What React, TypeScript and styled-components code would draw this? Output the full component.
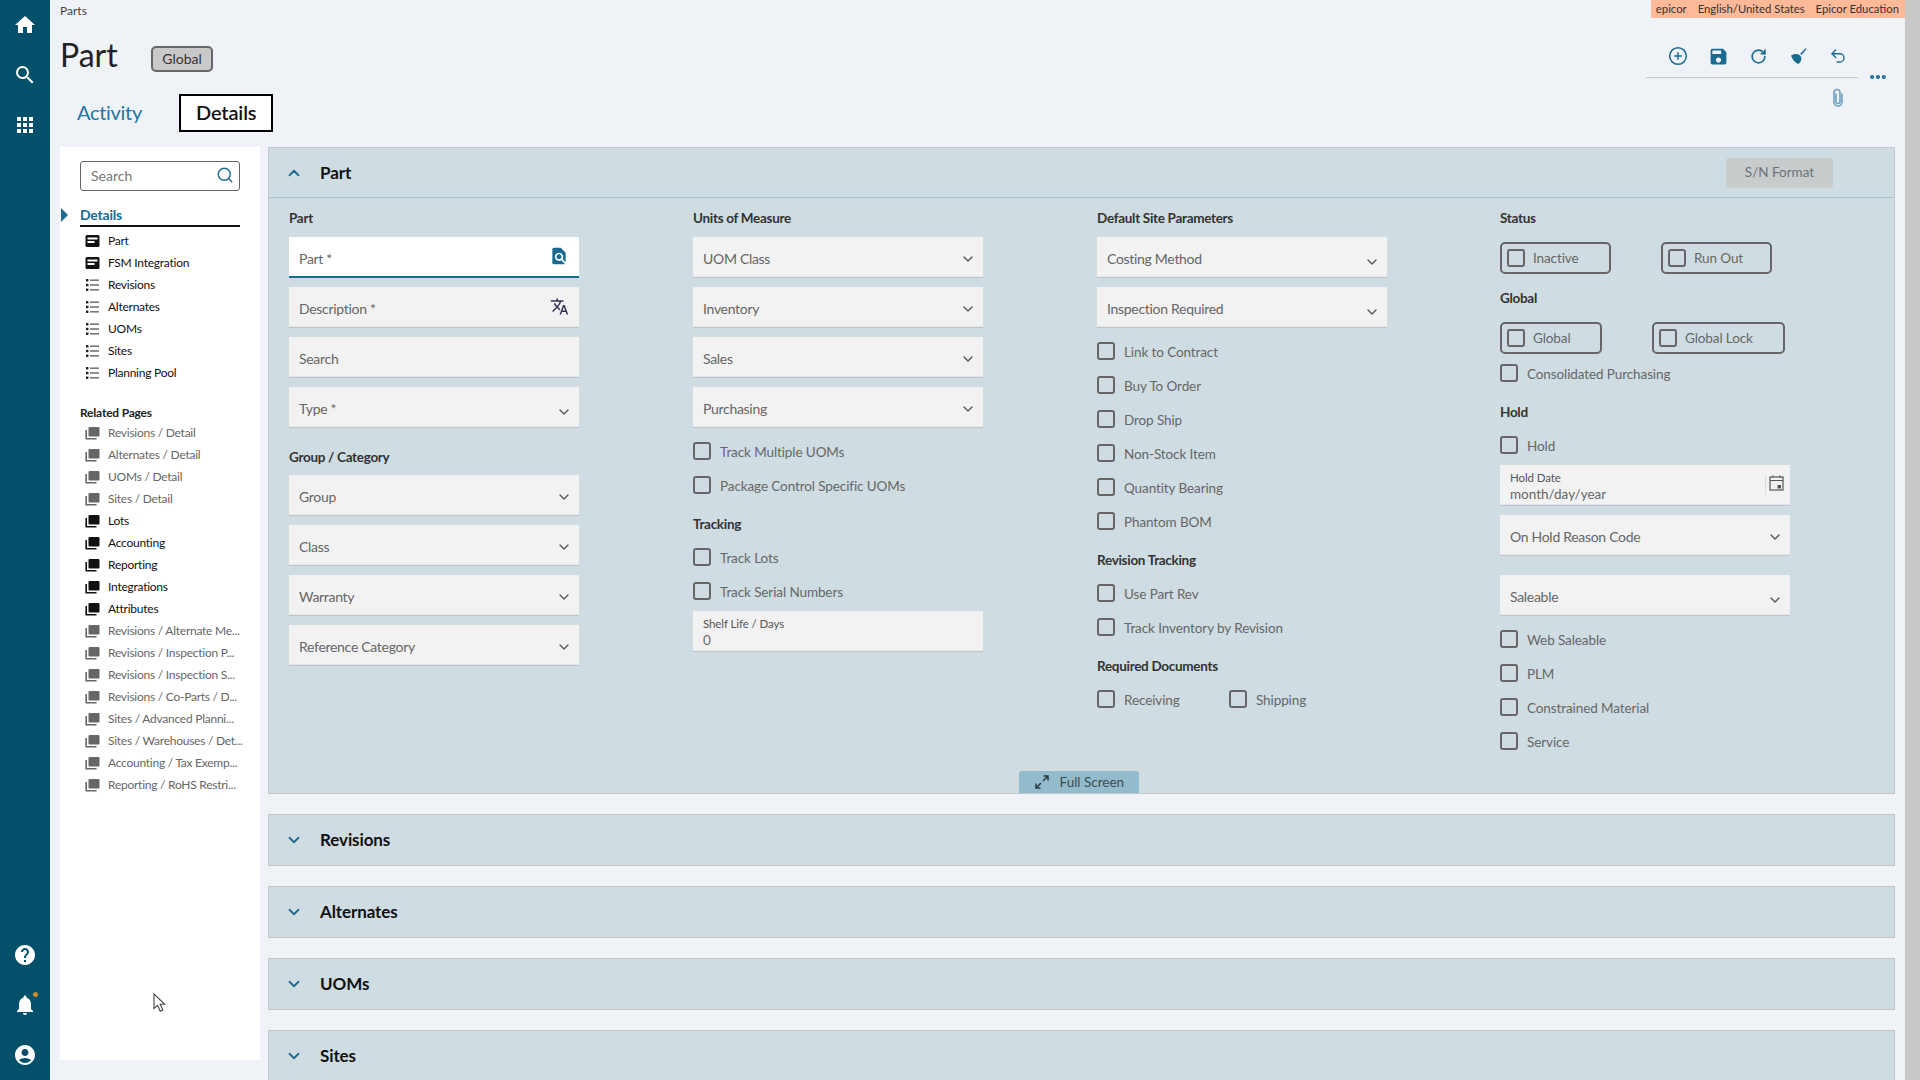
import React from "react";
import styled, { createGlobalStyle } from "styled-components";
import { ChevronDown, ChevronUp, CirclePlus, MoreHorizontal, RotateCw, Search, Undo2 } from "lucide-react";
import {
    MdAccountCircle,
    MdApps,
    MdFindInPage,
    MdHelp,
    MdHome,
    MdNotifications,
    MdSave,
    MdSearch,
    MdTranslate,
} from "react-icons/md";

const BLUE = "#1b6a92";
const FONT = `"Lato", "Open Sans", sans-serif`;

const GlobalStyle = createGlobalStyle`
    html, body {
        margin: 0;
        height: 100%;
        overflow: hidden;
        background: #eff3f8;
        font-family: ${FONT};
    }
    * { box-sizing: border-box; }
`;

const Page = styled.div`
    display: flex;
    width: 1920px;
    height: 1080px;
    overflow: hidden;
`;

const Rail = styled.nav`
    width: 50px;
    flex: none;
    background: #02506a;
    display: flex;
    flex-direction: column;
    justify-content: space-between;
    align-items: center;
    color: #fff;
`;

const RailGroup = styled.div`
    display: flex;
    flex-direction: column;
`;

const RailButton = styled.div`
    position: relative;
    width: 50px;
    height: 50px;
    display: flex;
    align-items: center;
    justify-content: center;
`;

const RailBadge = styled.span`
    position: absolute;
    left: 33px;
    top: 12px;
    width: 5px;
    height: 5px;
    border-radius: 50%;
    background: #d18a2a;
`;

const Main = styled.div`
    flex: 1;
    min-width: 0;
    display: flex;
    flex-direction: column;
`;

const Scrollbar = styled.div`
    width: 15px;
    flex: none;
    background: #c8c8c8;
`;

const TopRow = styled.div`
    height: 18px;
    display: flex;
    justify-content: space-between;
`;

const Crumb = styled.div`
    padding: 3px 0 0 10px;
    font-size: 12px;
    line-height: 16px;
    color: #444;
`;

const UserBar = styled.div`
    display: flex;
    gap: 11px;
    height: 18px;
    padding: 0 6px 0 5px;
    background: #fdb998;
    font-size: 11.3px;
    line-height: 18px;
    color: #333;
`;

const Header = styled.header`
    height: 129px;
    display: flex;
    justify-content: space-between;
`;

const HeaderLeft = styled.div`
    padding-left: 10px;
`;

const TitleRow = styled.div`
    display: flex;
    align-items: flex-start;
    padding-top: 17px;
`;

const Title = styled.h1`
    margin: 0;
    width: 91px;
    font-size: 32px;
    line-height: 40px;
    font-weight: 400;
    color: #222;
`;

const Badge = styled.span`
    margin-top: 11px;
    width: 62px;
    height: 26px;
    border: 2px solid #666;
    border-radius: 5px;
    background: #c9c9c9;
    font-size: 14px;
    line-height: 22px;
    text-align: center;
    color: #333;
`;

const Tabs = styled.div`
    display: flex;
    gap: 20px;
    margin-top: 19px;
`;

const Tab = styled.div<{ $active?: boolean }>`
    height: 38px;
    padding: 0 15px;
    font-size: 20px;
    line-height: 32px;
    letter-spacing: ${(p) => (p.$active ? "-0.15px" : "-0.3px")};
    border: 2px solid ${(p) => (p.$active ? "#000" : "transparent")};
    background: ${(p) => (p.$active ? "#fff" : "transparent")};
    color: ${(p) => (p.$active ? "#111" : "#24769f")};
    font-weight: ${(p) => (p.$active ? 600 : 400)};
`;

const HeaderRight = styled.div`
    width: 242px;
    margin-right: 17px;
`;

const ToolRow = styled.div`
    display: flex;
    align-items: flex-end;
`;

const ToolGroup = styled.div`
    width: 212px;
    height: 60px;
    display: flex;
    padding: 26px 0 0 12px;
    border-bottom: 1px solid #c6cbcf;
`;

const ToolIcon = styled.div`
    width: 40px;
    height: 24px;
    display: flex;
    align-items: center;
    justify-content: center;
    color: ${BLUE};
`;

const MoreButton = styled.div`
    width: 20px;
    height: 20px;
    margin: 0 0 -9px 10px;
    color: ${BLUE};
`;

const ClipRow = styled.div`
    width: 212px;
    margin-top: 10px;
    padding-left: 185px;
    height: 20px;
`;

const Body = styled.div`
    flex: 1;
    min-height: 0;
    display: flex;
    gap: 8px;
    padding-left: 10px;
    overflow: hidden;
`;

const TreePanel = styled.aside`
    position: relative;
    width: 200px;
    height: 913px;
    flex: none;
    background: #fff;
    padding: 14px 20px 0;
`;

const TreeSearch = styled.div`
    height: 30px;
    display: flex;
    align-items: center;
    justify-content: space-between;
    border: 1px solid #666;
    border-radius: 3px;
    padding: 0 5px 2px 10px;
    font-size: 14px;
    color: #777;
`;

const TreeHead = styled.div`
    position: relative;
    margin-top: 14px;
    height: 22px;
    border-bottom: 2px solid #111;
    font-size: 14px;
    line-height: 20px;
    font-weight: 700;
    letter-spacing: -0.2px;
    color: ${BLUE};

    &::before {
        content: "";
        position: absolute;
        left: -19px;
        top: 3px;
        border-left: 7px solid ${BLUE};
        border-top: 7px solid transparent;
        border-bottom: 7px solid transparent;
    }
`;

const TreeList = styled.div`
    margin-top: 3px;
`;

const TreeItem = styled.div<{ $muted?: boolean }>`
    height: 22px;
    display: flex;
    align-items: center;
    gap: 8px;
    padding-left: 5px;
    font-size: 12px;
    letter-spacing: -0.25px;
    white-space: nowrap;
    color: ${(p) => (p.$muted ? "#666" : "#111")};

    svg {
        flex: none;
    }
`;

const TreeText = styled.span`
    margin-top: -1px;
`;

const RelatedTitle = styled.div`
    margin-top: 20px;
    height: 18px;
    font-size: 12px;
    line-height: 18px;
    font-weight: 700;
    letter-spacing: -0.2px;
    color: #222;
`;

const Cursor = styled.div`
    position: absolute;
    left: 93px;
    top: 846px;
`;

const Panels = styled.div`
    width: 1627px;
    flex: none;
    display: flex;
    flex-direction: column;
    gap: 20px;
`;

const Panel = styled.section`
    flex: none;
    background: #cfdce1;
    border: 1px solid #c0c8cc;
`;

const PanelHead = styled.div<{ $open?: boolean }>`
    height: 50px;
    display: flex;
    align-items: center;
    padding: 0 61px ${(p) => (p.$open ? "0" : "1px")} 16px;
    border-bottom: ${(p) => (p.$open ? "1px solid #a3c4cd" : "none")};
    color: ${BLUE};
`;

const PanelTitle = styled.h2`
    flex: 1;
    margin: 0 0 0 17px;
    font-size: 17px;
    font-weight: 700;
    letter-spacing: -0.1px;
    color: #111;
`;

const FormatButton = styled.div`
    width: 107px;
    height: 30px;
    border-radius: 3px;
    background: #c8cccd;
    font-size: 13.5px;
    line-height: 29px;
    text-align: center;
    color: #6b7276;
`;

const FormGrid = styled.div`
    display: grid;
    grid-template-columns: 404px 404px 403px 290px;
    padding: 12px 0 0 20px;
`;

const Column = styled.div`
    display: flex;
    flex-direction: column;
`;

const SectionTitle = styled.div<{ $top?: number }>`
    height: 18px;
    margin-top: ${(p) => p.$top ?? 21}px;
    margin-bottom: 9px;
    font-size: 13.5px;
    line-height: 18px;
    font-weight: 700;
    letter-spacing: -0.3px;
    color: #333;

    &:first-child {
        margin-top: 0;
        line-height: 16px;
    }
`;

const Fields = styled.div<{ $after?: number }>`
    display: flex;
    flex-direction: column;
    gap: 10px;
    margin-bottom: ${(p) => p.$after ?? 9}px;
    width: 290px;
`;

const FieldBox = styled.div<{ $focus?: boolean }>`
    position: relative;
    height: 40px;
    display: flex;
    align-items: center;
    justify-content: space-between;
    padding: 4px 10px 0;
    background: ${(p) => (p.$focus ? "#fff" : "#f2f2f2")};
    box-shadow: 0 1px 0 ${(p) => (p.$focus ? "#1b6a92" : "#bfc5c8")};
    border-bottom: 1px solid ${(p) => (p.$focus ? "#1b6a92" : "#e4e6e7")};
    font-size: 14px;
    letter-spacing: -0.3px;
    color: #666;
`;

const FieldIcon = styled.span<{ $color?: string; $low?: boolean; $inset?: boolean }>`
    display: flex;
    margin: ${(p) => (p.$low ? "6px" : p.$inset ? "-5px" : "0")} ${(p) => (p.$inset ? "0" : "-3px")} 0 0;
    color: ${(p) => p.$color ?? "#555"};
`;

const StackedField = styled(FieldBox)`
    display: block;
    width: 290px;
    padding: 6px 10px 0;
`;

const SmallLabel = styled.div`
    font-size: 11.5px;
    line-height: 14px;
    letter-spacing: -0.1px;
    color: #555;
`;

const StackedValue = styled.div`
    margin-top: 1px;
    font-size: 13.5px;
    line-height: 17px;
    letter-spacing: 0;
    color: #666;
`;

const DateIcon = styled.div`
    position: absolute;
    right: 0;
    top: 10px;
    width: 25px;
    height: 20px;
    padding-left: 3px;
    border-left: 1px solid #dcdcdc;
`;

const Checks = styled.div<{ $after?: number }>`
    display: flex;
    flex-direction: column;
    gap: 16px;
    padding-top: 6px;
    margin-bottom: ${(p) => p.$after ?? 0}px;
`;

const CheckRow = styled.div<{ $width?: number }>`
    display: flex;
    align-items: center;
    gap: 9px;
    height: 18px;
    width: ${(p) => (p.$width ? `${p.$width}px` : "auto")};
    font-size: 13.5px;
    letter-spacing: -0.1px;
    white-space: nowrap;
    color: #666;
`;

const CheckText = styled.span`
    margin-top: 2px;
`;

const CheckBox = styled.span`
    width: 18px;
    height: 18px;
    flex: none;
    border: 2px solid #666;
    border-radius: 3px;
`;

const InlineChecks = styled.div`
    display: flex;
    padding-top: 6px;
`;

const WrapRow = styled.div<{ $top: number }>`
    display: flex;
    gap: 50px;
    margin-top: ${(p) => p.$top}px;
    margin-bottom: 10px;
`;

const WrapCheck = styled.div<{ $width: number }>`
    width: ${(p) => p.$width}px;
    height: 32px;
    display: flex;
    align-items: center;
    gap: 8px;
    padding-left: 5px;
    border: 2px solid #666;
    border-radius: 5px;
    font-size: 13.5px;
    letter-spacing: -0.1px;
    color: #666;
`;

const PanelFoot = styled.div`
    display: flex;
    justify-content: center;
    margin-top: 21px;
    padding-right: 6px;
`;

const FullScreen = styled.div`
    width: 120px;
    height: 22px;
    display: flex;
    align-items: center;
    gap: 11px;
    padding: 0 0 1px 16px;
    border-radius: 3px 3px 0 0;
    background: #92bccb;
    font-size: 13.5px;
    color: #3a4a50;
`;

const CardIcon = () => (
    <svg width="15" height="14" viewBox="0 0 15 14">
        <rect x="0.5" y="1" width="14" height="12" rx="1.5" fill="#111" />
        <rect x="2.5" y="3.5" width="10" height="2" fill="#fff" />
        <rect x="2.5" y="7" width="7" height="2" fill="#fff" />
    </svg>
);

const ListIcon = () => (
    <svg width="15" height="14" viewBox="0 0 15 14">
        <g fill="#222">
            <rect x="1" y="1" width="2.4" height="2.4" />
            <rect x="1" y="5.8" width="2.4" height="2.4" />
            <rect x="1" y="10.6" width="2.4" height="2.4" />
        </g>
        <g fill="#777">
            <rect x="5" y="1.4" width="9" height="1.6" />
            <rect x="5" y="6.2" width="9" height="1.6" />
            <rect x="5" y="11" width="9" height="1.6" />
        </g>
    </svg>
);

const PagesIcon = ({ color }: { color: string }) => (
    <svg width="15" height="14" viewBox="0 0 15 14">
        <rect x="3.5" y="1" width="11" height="9.5" rx="1.2" fill={color} />
        <path d="M1.2 4v8.8h10.3" fill="none" stroke={color} strokeWidth="1.6" />
    </svg>
);

const BroomIcon = () => (
    <svg width="18" height="18" viewBox="0 0 18 18" fill={BLUE}>
        <path d="M16.6 1.2l-5.400 5.600 1.300 1.300 5-6z" />
        <path d="M2 8.600c2.600-1.800 6-2.100 8.200-.8l1.900 1.900c.9 2.600-.4 5.400-2.600 7.200-1.400-.5-2.700-1.400-3.900-2.500C3.900 13 2.800 10.900 2 8.600z" />
    </svg>
);

const ClipIcon = () => (
    <svg width="14" height="20" viewBox="0 0 14 20" fill="none" stroke="#6f9fbb" strokeWidth="1.6">
        <path d="M5 5.500v8a2 2 0 0 0 4 0V4.500a3 3 0 0 0-6 0v9.500a4 4 0 0 0 8 0V5.500" />
    </svg>
);

const CalendarIcon = () => (
    <svg width="15" height="16" viewBox="0 0 15 16" fill="none" stroke="#555" strokeWidth="1.2">
        <rect x="1" y="2" width="13" height="13" />
        <path d="M1 5.500h13M4 .5v2M11 .5v2" />
        <rect x="8.500" y="10" width="3.500" height="3.500" fill="#555" stroke="none" />
    </svg>
);

const ExpandIcon = () => (
    <svg width="14" height="14" viewBox="0 0 14 14" fill="none" stroke="#2c3a40" strokeWidth="1.5">
        <path d="M8 6l5-5M8.500 1H13v4.500M6 8l-5 5M1 8.500V13h4.500" />
    </svg>
);

const PointerIcon = () => (
    <svg width="13" height="20" viewBox="0 0 13 20">
        <path d="M1 1v14.500l3.600-3.200 2.600 6 2.600-1.200-2.600-5.800h4.600z" fill="#fff" stroke="#444" strokeWidth="1.1" />
    </svg>
);

const Select = ({ label, low }: { label: string; low?: boolean }) => (
    <FieldBox>
        {label}
        <FieldIcon $low={low}>
            <ChevronDown size={16} strokeWidth={2} />
        </FieldIcon>
    </FieldBox>
);

const Check = ({ label, width }: { label: string; width?: number }) => (
    <CheckRow $width={width}>
        <CheckBox />
        <CheckText>{label}</CheckText>
    </CheckRow>
);

const CheckList = ({ items, after }: { items: string[]; after?: number }) => (
    <Checks $after={after}>
        {items.map((item) => (
            <Check key={item} label={item} />
        ))}
    </Checks>
);

const Boxed = ({ label, width }: { label: string; width: number }) => (
    <WrapCheck $width={width}>
        <CheckBox />
        {label}
    </WrapCheck>
);

const detailItems = [
    { label: "Part", card: true },
    { label: "FSM Integration", card: true },
    { label: "Revisions" },
    { label: "Alternates" },
    { label: "UOMs" },
    { label: "Sites" },
    { label: "Planning Pool" },
];

const relatedPages = [
    { label: "Revisions / Detail", muted: true },
    { label: "Alternates / Detail", muted: true },
    { label: "UOMs / Detail", muted: true },
    { label: "Sites / Detail", muted: true },
    { label: "Lots" },
    { label: "Accounting" },
    { label: "Reporting" },
    { label: "Integrations" },
    { label: "Attributes" },
    { label: "Revisions / Alternate Me...", muted: true },
    { label: "Revisions / Inspection P...", muted: true },
    { label: "Revisions / Inspection S...", muted: true },
    { label: "Revisions / Co-Parts / D...", muted: true },
    { label: "Sites / Advanced Planni...", muted: true },
    { label: "Sites / Warehouses / Det...", muted: true },
    { label: "Accounting / Tax Exemp...", muted: true },
    { label: "Reporting / RoHS Restri...", muted: true },
];

const closedPanels = ["Revisions", "Alternates", "UOMs", "Sites"];

export default function App() {
    return (
        <Page>
            <GlobalStyle />
            <Rail>
                <RailGroup>
                    <RailButton><MdHome size={24} /></RailButton>
                    <RailButton><MdSearch size={24} /></RailButton>
                    <RailButton><MdApps size={24} /></RailButton>
                </RailGroup>
                <RailGroup>
                    <RailButton><MdHelp size={24} /></RailButton>
                    <RailButton>
                        <MdNotifications size={24} />
                        <RailBadge />
                    </RailButton>
                    <RailButton><MdAccountCircle size={24} /></RailButton>
                </RailGroup>
            </Rail>

            <Main>
                <TopRow>
                    <Crumb>Parts</Crumb>
                    <UserBar>
                        <span>epicor</span>
                        <span>English/United States</span>
                        <span>Epicor Education</span>
                    </UserBar>
                </TopRow>

                <Header>
                    <HeaderLeft>
                        <TitleRow>
                            <Title>Part</Title>
                            <Badge>Global</Badge>
                        </TitleRow>
                        <Tabs>
                            <Tab>Activity</Tab>
                            <Tab $active>Details</Tab>
                        </Tabs>
                    </HeaderLeft>
                    <HeaderRight>
                        <ToolRow>
                            <ToolGroup>
                                <ToolIcon><CirclePlus size={20} strokeWidth={1.8} /></ToolIcon>
                                <ToolIcon><MdSave size={21} /></ToolIcon>
                                <ToolIcon><RotateCw size={17} strokeWidth={2.4} /></ToolIcon>
                                <ToolIcon><BroomIcon /></ToolIcon>
                                <ToolIcon><Undo2 size={18} strokeWidth={1.8} /></ToolIcon>
                            </ToolGroup>
                            <MoreButton><MoreHorizontal size={20} strokeWidth={3} /></MoreButton>
                        </ToolRow>
                        <ClipRow><ClipIcon /></ClipRow>
                    </HeaderRight>
                </Header>

                <Body>
                    <TreePanel>
                        <TreeSearch>
                            Search
                            <Search size={18} color={BLUE} strokeWidth={1.9} />
                        </TreeSearch>
                        <TreeHead>Details</TreeHead>
                        <TreeList>
                            {detailItems.map((item) => (
                                <TreeItem key={item.label}>
                                    {item.card ? <CardIcon /> : <ListIcon />}
                                    <TreeText>{item.label}</TreeText>
                                </TreeItem>
                            ))}
                        </TreeList>
                        <RelatedTitle>Related Pages</RelatedTitle>
                        {relatedPages.map((page) => (
                            <TreeItem key={page.label} $muted={page.muted}>
                                <PagesIcon color={page.muted ? "#666" : "#111"} />
                                <TreeText>{page.label}</TreeText>
                            </TreeItem>
                        ))}
                        <Cursor><PointerIcon /></Cursor>
                    </TreePanel>

                    <Panels>
                        <Panel>
                            <PanelHead $open>
                                <ChevronUp size={18} strokeWidth={2.4} />
                                <PanelTitle>Part</PanelTitle>
                                <FormatButton>S/N Format</FormatButton>
                            </PanelHead>
                            <FormGrid>
                                <Column>
                                    <SectionTitle>Part</SectionTitle>
                                    <Fields $after={0}>
                                        <FieldBox $focus>
                                            Part *
                                            <FieldIcon $inset $color={BLUE}><MdFindInPage size={20} /></FieldIcon>
                                        </FieldBox>
                                        <FieldBox>
                                            Description *
                                            <FieldIcon $inset $color="#335"><MdTranslate size={19} /></FieldIcon>
                                        </FieldBox>
                                        <FieldBox>Search</FieldBox>
                                        <Select label="Type *" low />
                                    </Fields>
                                    <SectionTitle>Group / Category</SectionTitle>
                                    <Fields>
                                        <Select label="Group" />
                                        <Select label="Class" />
                                        <Select label="Warranty" />
                                        <Select label="Reference Category" />
                                    </Fields>
                                </Column>

                                <Column>
                                    <SectionTitle>Units of Measure</SectionTitle>
                                    <Fields>
                                        <Select label="UOM Class" />
                                        <Select label="Inventory" />
                                        <Select label="Sales" />
                                        <Select label="Purchasing" />
                                    </Fields>
                                    <CheckList items={["Track Multiple UOMs", "Package Control Specific UOMs"]} />
                                    <SectionTitle>Tracking</SectionTitle>
                                    <CheckList items={["Track Lots", "Track Serial Numbers"]} after={11} />
                                    <StackedField>
                                        <SmallLabel>Shelf Life / Days</SmallLabel>
                                        <StackedValue>0</StackedValue>
                                    </StackedField>
                                </Column>

                                <Column>
                                    <SectionTitle>Default Site Parameters</SectionTitle>
                                    <Fields>
                                        <Select label="Costing Method" low />
                                        <Select label="Inspection Required" low />
                                    </Fields>
                                    <CheckList
                                        items={[
                                            "Link to Contract",
                                            "Buy To Order",
                                            "Drop Ship",
                                            "Non-Stock Item",
                                            "Quantity Bearing",
                                            "Phantom BOM",
                                        ]}
                                    />
                                    <SectionTitle>Revision Tracking</SectionTitle>
                                    <CheckList items={["Use Part Rev", "Track Inventory by Revision"]} />
                                    <SectionTitle>Required Documents</SectionTitle>
                                    <InlineChecks>
                                        <Check label="Receiving" width={132} />
                                        <Check label="Shipping" />
                                    </InlineChecks>
                                </Column>

                                <Column>
                                    <SectionTitle>Status</SectionTitle>
                                    <WrapRow $top={5}>
                                        <Boxed label="Inactive" width={111} />
                                        <Boxed label="Run Out" width={111} />
                                    </WrapRow>
                                    <SectionTitle $top={5}>Global</SectionTitle>
                                    <WrapRow $top={6}>
                                        <Boxed label="Global" width={102} />
                                        <Boxed label="Global Lock" width={133} />
                                    </WrapRow>
                                    <Check label="Consolidated Purchasing" />
                                    <SectionTitle>Hold</SectionTitle>
                                    <CheckList items={["Hold"]} after={11} />
                                    <Fields $after={20}>
                                        <StackedField>
                                            <SmallLabel>Hold Date</SmallLabel>
                                            <StackedValue>month/day/year</StackedValue>
                                            <DateIcon><CalendarIcon /></DateIcon>
                                        </StackedField>
                                        <Select label="On Hold Reason Code" />
                                    </Fields>
                                    <Fields>
                                        <Select label="Saleable" low />
                                    </Fields>
                                    <CheckList items={["Web Saleable", "PLM", "Constrained Material", "Service"]} />
                                </Column>
                            </FormGrid>
                            <PanelFoot>
                                <FullScreen>
                                    <ExpandIcon />
                                    Full Screen
                                </FullScreen>
                            </PanelFoot>
                        </Panel>

                        {closedPanels.map((name) => (
                            <Panel key={name}>
                                <PanelHead>
                                    <ChevronDown size={18} strokeWidth={2.4} />
                                    <PanelTitle>{name}</PanelTitle>
                                </PanelHead>
                            </Panel>
                        ))}
                    </Panels>
                </Body>
            </Main>
            <Scrollbar />
        </Page>
    );
}
